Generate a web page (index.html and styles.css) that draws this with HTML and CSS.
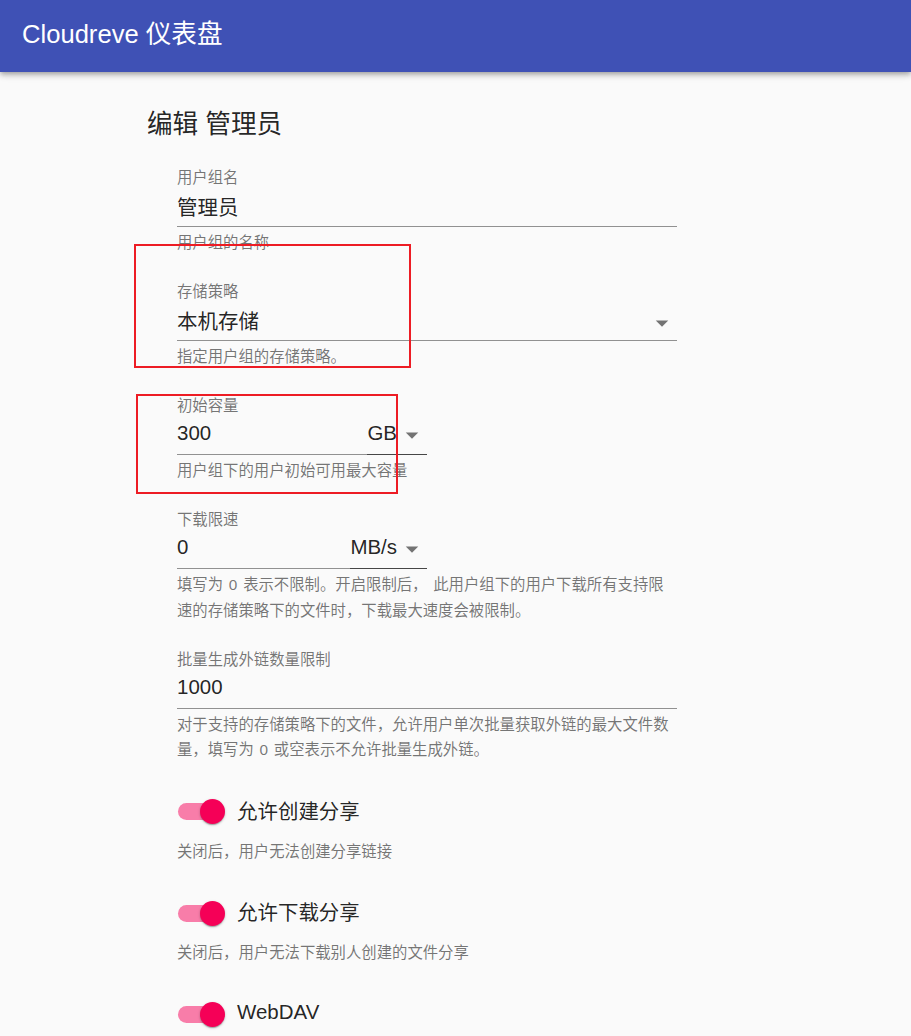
FILE: index.html
```html
<!DOCTYPE html>
<html>
<head>
    <title>Cloudreve 仪表盘</title>
    <link rel="stylesheet" href="styles.css">
</head>
<body>
    <div id="header">
        <h1 class="app-title">Cloudreve 仪表盘</h1>
    </div>

    <div id="content">
        <h2 class="page-title">编辑 管理员</h2>

        <form id="group-form">
            <div class="fields">
                <div class="field">
                    <label class="field-label" for="group-name">用户组名</label>
                    <input type="text" id="group-name" class="text-input" value="管理员">
                    <p class="helper">用户组的名称</p>
                </div>

                <div class="field">
                    <span class="field-label">存储策略</span>
                    <div class="select full">
                        <span class="select-value">本机存储</span>
                        <svg class="arrow" width="30" height="24" viewBox="0 0 30 24"><polygon points="8.75,10.5 21.25,10.5 15,16.75"/></svg>
                    </div>
                    <p class="helper">指定用户组的存储策略。</p>
                </div>

                <div class="field">
                    <label class="field-label" for="max-storage">初始容量</label>
                    <div class="input-group">
                        <input type="text" id="max-storage" class="text-input num" value="300">
                        <div class="select unit">
                            <span class="select-value num">GB</span>
                            <svg class="arrow" width="30" height="24" viewBox="0 0 30 24"><polygon points="8.75,8.5 21.25,8.5 15,14.75"/></svg>
                        </div>
                    </div>
                    <p class="helper">用户组下的用户初始可用最大容量</p>
                </div>

                <div class="field">
                    <label class="field-label" for="speed-limit">下载限速</label>
                    <div class="input-group">
                        <input type="text" id="speed-limit" class="text-input num" value="0">
                        <div class="select unit">
                            <span class="select-value num">MB/s</span>
                            <svg class="arrow" width="30" height="24" viewBox="0 0 30 24"><polygon points="8.75,8.5 21.25,8.5 15,14.75"/></svg>
                        </div>
                    </div>
                    <p class="helper">填写为 0 表示不限制。开启限制后， 此用户组下的用户下载所有支持限速的存储策略下的文件时，下载最大速度会被限制。</p>
                </div>

                <div class="field">
                    <label class="field-label" for="source-batch">批量生成外链数量限制</label>
                    <input type="text" id="source-batch" class="text-input num" value="1000">
                    <p class="helper">对于支持的存储策略下的文件，允许用户单次批量获取外链的最大文件数量，填写为 0 或空表示不允许批量生成外链。</p>
                </div>
            </div>

            <div class="switches">
                <div class="switch-field">
                    <label class="switch-row">
                        <span class="switch on"></span>
                        <span class="switch-label">允许创建分享</span>
                    </label>
                    <p class="helper">关闭后，用户无法创建分享链接</p>
                </div>

                <div class="switch-field">
                    <label class="switch-row">
                        <span class="switch on"></span>
                        <span class="switch-label">允许下载分享</span>
                    </label>
                    <p class="helper">关闭后，用户无法下载别人创建的文件分享</p>
                </div>

                <div class="switch-field">
                    <label class="switch-row">
                        <span class="switch on"></span>
                        <span class="switch-label num">WebDAV</span>
                    </label>
                </div>
            </div>
        </form>
    </div>

    <!-- annotation boxes drawn over the form -->
    <div class="mark mark-policy"></div>
    <div class="mark mark-storage"></div>
</body>
</html>
```

FILE: styles.css
```css
body {
    margin: 0;
    padding: 0;
    background-color: #fafafa;
    font-family: "Liberation Sans", "Noto Sans CJK SC", sans-serif;
    color: rgba(0, 0, 0, 0.87);
}

#header {
    position: relative;
    z-index: 1;
    height: 72px;
    display: flex;
    align-items: center;
    padding: 0 0 3px 22px;
    box-sizing: border-box;
    background-color: #3f51b5;
    color: #fff;
    box-shadow: 0 2px 4px -1px rgba(0, 0, 0, 0.2), 0 4px 5px 0 rgba(0, 0, 0, 0.14), 0 1px 10px 0 rgba(0, 0, 0, 0.12);
}

.app-title {
    margin: 0;
    font-size: 25.6px;
    font-weight: 400;
    line-height: 1.2;
}

#content {
    padding: 36px 0 0 147px;
}

.page-title {
    margin: 0 0 29px;
    font-size: 25.6px;
    font-weight: 400;
    line-height: 32px;
}

#group-form {
    width: 500px;
    margin-left: 30px;
}

.field {
    margin-bottom: 27.5px;
}

.fields .field:last-child {
    margin-bottom: 25px;
}

.field-label {
    display: block;
    font-size: 15.36px;
    line-height: 18px;
    color: rgba(0, 0, 0, 0.54);
}

.text-input {
    display: block;
    width: 100%;
    height: 24px;
    margin: 0;
    padding: 9px 0 6px;
    box-sizing: content-box;
    border: none;
    border-bottom: 1px solid rgba(0, 0, 0, 0.42);
    background: none;
    outline: none;
    font-family: inherit;
    font-size: 20.48px;
    line-height: 24px;
    color: rgba(0, 0, 0, 0.87);
}

/* latin-only values sit a little higher than the CJK ones */
.text-input.num {
    padding: 6px 0 9px;
}

.input-group {
    display: flex;
    width: 250px;
}

.input-group .text-input {
    flex: 1;
    width: auto;
    min-width: 0;
}

.select {
    display: flex;
    align-items: center;
    padding: 9px 0 6px;
    border-bottom: 1px solid rgba(0, 0, 0, 0.42);
    font-size: 20.48px;
    line-height: 24px;
}

.select.full {
    justify-content: space-between;
}

.select.unit {
    border-bottom-color: rgba(0, 0, 0, 0.72);
}

.select-value.num {
    line-height: 18px;
    padding-bottom: 6px;
}

.arrow {
    display: block;
    fill: rgba(0, 0, 0, 0.54);
}

.helper {
    margin: 3px 0 0;
    font-size: 15.36px;
    line-height: 25.5px;
    word-spacing: 1.5px;
    color: rgba(0, 0, 0, 0.54);
}

.switch-field {
    margin-bottom: 25px;
}

.switch-field:last-child {
    margin-bottom: 0;
}

.switch-row {
    display: flex;
    align-items: center;
    height: 48px;
}

.switch {
    position: relative;
    width: 48px;
    height: 48px;
    margin-right: 12px;
}

.switch::before {
    content: "";
    position: absolute;
    left: 1px;
    top: 15.5px;
    width: 42px;
    height: 17px;
    border-radius: 8.5px;
    background-color: #f50057;
    opacity: 0.5;
}

.switch::after {
    content: "";
    position: absolute;
    left: 22.5px;
    top: 11.5px;
    width: 25px;
    height: 25px;
    border-radius: 50%;
    background-color: #f50057;
    box-shadow: 0 1px 3px 0 rgba(0, 0, 0, 0.2), 0 1px 1px 0 rgba(0, 0, 0, 0.14), 0 2px 1px -1px rgba(0, 0, 0, 0.12);
}

.switch-label {
    font-size: 20.48px;
    line-height: 24px;
}

.switch-label.num {
    line-height: 18px;
    padding-bottom: 6px;
}

.mark {
    position: absolute;
    border: 2px solid #ed1c24;
    box-sizing: border-box;
}

.mark-policy {
    left: 134px;
    top: 244px;
    width: 277px;
    height: 124px;
}

.mark-storage {
    left: 136px;
    top: 394px;
    width: 262px;
    height: 100px;
}
```
